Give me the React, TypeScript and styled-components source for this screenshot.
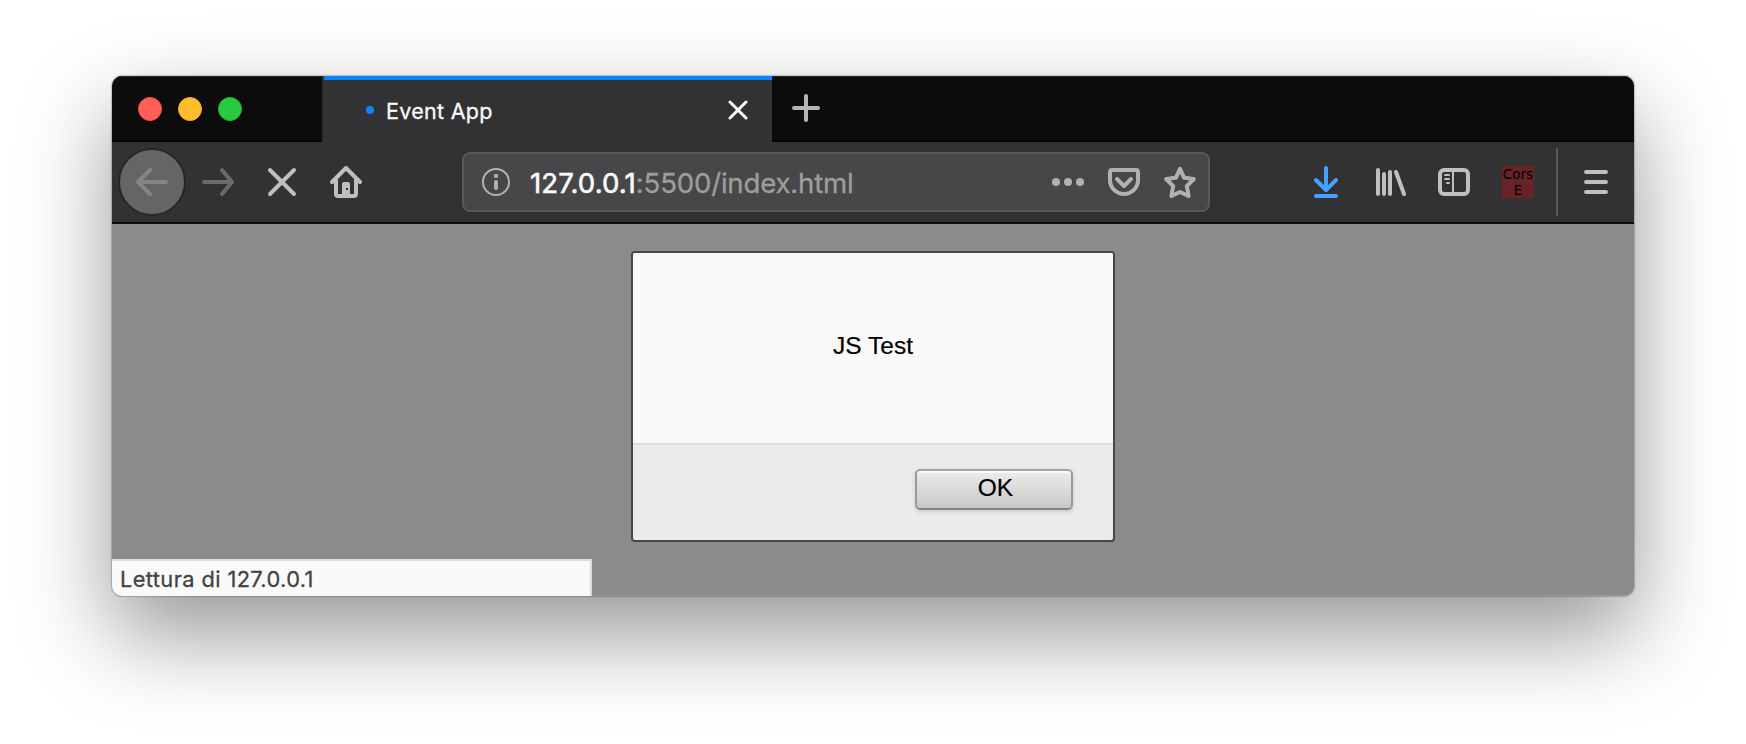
import React from 'react';
import styled, { createGlobalStyle } from 'styled-components';

const GlobalStyle = createGlobalStyle`
  *, *::before, *::after { box-sizing: border-box; }
  body { margin: 0; background: #fff; font-family: Inter, "Liberation Sans", sans-serif; }
  button { font: inherit; border: 0; padding: 0; background: none; }
`;

const Desktop = styled.main`
  height: 744px;
  padding: 76px 112px 0;
  overflow: hidden;
`;

const Window = styled.section`
  height: 520px;
  display: flex;
  flex-direction: column;
  border-radius: 10px;
  overflow: hidden;
  background: #8b8b8b;
  box-shadow: 0 0 1px 1px rgba(0, 0, 0, 0.2), 0 38px 90px rgba(0, 0, 0, 0.42);
`;

const TitleBar = styled.header`
  height: 66px;
  display: flex;
  background: #0c0c0d;
  box-shadow: inset 0 -2px #030303, inset 0 1px #2b2b2b;
`;

const TrafficLights = styled.div`
  width: 212px;
  display: flex;
  gap: 16px;
  padding: 21px 0 0 26px;
  border-right: 2px solid #2f2f30;
`;

const Light = styled.i<{ $color: string; $rim: string }>`
  width: 24px;
  height: 24px;
  border-radius: 50%;
  background: ${(p) => p.$color};
  border: 1px solid ${(p) => p.$rim};
`;

const Tab = styled.div`
  width: 448px;
  display: flex;
  align-items: center;
  padding: 2px 24px 0 42px;
  border-top: 4px solid #0a84ff;
  background: #323234;
  color: #f9f9fa;
  font-size: 21.5px;
  line-height: 28px;
`;

const LoadingDot = styled.i`
  width: 8px;
  height: 8px;
  margin-top: -4px;
  border-radius: 50%;
  background: #0a84ff;
`;

const TabTitle = styled.span`
  flex: 1;
  margin: -2px 0 0 12px;
  letter-spacing: 0.3px;
  -webkit-text-stroke: 0.3px;
`;

const CloseTab = styled.button`
  display: flex;
  margin-top: -4px;
  color: #f9f9fa;
`;

const NewTab = styled.button`
  display: flex;
  align-self: flex-start;
  margin: 16px 0 0 18px;
  color: #b5b5b6;
`;

const Toolbar = styled.nav`
  height: 82px;
  display: flex;
  align-items: center;
  padding: 0 22px 0 6px;
  background: #323234;
  border-bottom: 2px solid #0c0c0d;
`;

const BackButton = styled.button`
  width: 68px;
  height: 68px;
  flex: none;
  display: flex;
  align-items: center;
  justify-content: center;
  border-radius: 50%;
  border: 2px solid #272728;
  background: #656565;
  color: #848484;
`;

const ToolButton = styled.button<{ $gap?: number; $color?: string }>`
  display: flex;
  flex: none;
  margin-left: ${(p) => p.$gap ?? 32}px;
  color: ${(p) => p.$color ?? '#bfbfc0'};
`;

const UrlBar = styled.div`
  width: 748px;
  height: 60px;
  flex: none;
  display: flex;
  align-items: center;
  margin-left: 100px;
  padding: 0 12px 0 16px;
  border: 2px solid #58585a;
  border-radius: 8px;
  background: #474749;
  color: #b1b1b3;
  box-shadow: 0 2px 8px rgba(0, 0, 0, 0.06);
`;

const Address = styled.span`
  flex: 1;
  margin: 1px 0 0 18px;
  font-size: 27.6px;
  line-height: 36px;
  letter-spacing: -0.2px;
  color: #9d9d9e;
  -webkit-text-stroke: 0.3px;
`;

const Host = styled.span`
  color: #f9f9fa;
  letter-spacing: 0.1px;
  -webkit-text-stroke: 0.6px;
`;

const CorsBadge = styled.div`
  width: 32px;
  height: 32px;
  flex: none;
  margin-left: 32px;
  background: #672427;
  color: #000;
  font: 13.5px/16px "DejaVu Sans", sans-serif;
  text-align: center;
`;

const Divider = styled.i`
  width: 2px;
  height: 68px;
  flex: none;
  margin-left: 22px;
  background: #5b5b5d;
`;

const Page = styled.div`
  flex: 1;
  position: relative;
  display: flex;
  justify-content: center;
  align-items: flex-start;
  padding-top: 27px;
  box-shadow: inset 0 -1px #9a9a9a;
`;

const Dialog = styled.div`
  width: 484px;
  height: 291px;
  display: flex;
  flex-direction: column;
  border: 2px solid #464646;
  border-radius: 4px;
  overflow: hidden;
  background: #ebebeb;
  color: #000;
  font-family: "Liberation Sans", Arial, sans-serif;
  font-size: 24.5px;
  -webkit-text-stroke: 0.2px;
`;

const Message = styled.p`
  height: 192px;
  margin: 0;
  padding-top: 79px;
  line-height: 28px;
  text-align: center;
  background: #f9f9f9;
  border-bottom: 2px solid #dfdfdf;
`;

const Actions = styled.div`
  display: flex;
  justify-content: flex-end;
  padding: 24px 40px 0 0;
`;

const OkButton = styled.button`
  width: 158px;
  height: 41px;
  padding: 0 0 4px 3px;
  color: #000;
  line-height: 33px;
  border: 2px solid #999;
  border-top-color: #a5a5a5;
  border-bottom-color: #858585;
  border-radius: 5px;
  background: linear-gradient(#ececec, #c8c8c8);
  box-shadow: inset 0 2px #fafafa, 0 2px 4px rgba(0, 0, 0, 0.13);
`;

const StatusBar = styled.div`
  position: absolute;
  left: 0;
  bottom: 0;
  width: 480px;
  height: 37px;
  padding-left: 8px;
  border: solid #dcdcdc;
  border-width: 2px 2px 0 0;
  background: #f9f9fa;
  color: #424243;
  font-size: 21.8px;
  line-height: 36px;
  letter-spacing: 0.4px;
  -webkit-text-stroke: 0.3px;
`;

type IconProps = { size?: number; width?: number; children: React.ReactNode };

const Icon = ({ size = 32, width = 4, children }: IconProps) => (
  <svg
    width={size}
    height={size}
    viewBox={`0 0 ${size} ${size}`}
    fill="none"
    stroke="currentColor"
    strokeWidth={width}
    strokeLinecap="round"
    strokeLinejoin="round"
  >
    {children}
  </svg>
);

export default function App() {
  return (
    <Desktop>
      <GlobalStyle />
      <Window>
        <TitleBar>
          <TrafficLights>
            <Light $color="#ff5f57" $rim="#f2524a" />
            <Light $color="#ffbd2e" $rim="#f0ae24" />
            <Light $color="#28ca42" $rim="#1fba36" />
          </TrafficLights>
          <Tab>
            <LoadingDot />
            <TabTitle>Event App</TabTitle>
            <CloseTab aria-label="Close tab">
              <Icon size={20} width={3}>
                <path d="M2 2L18 18M18 2L2 18" />
              </Icon>
            </CloseTab>
          </Tab>
          <NewTab aria-label="New tab">
            <Icon>
              <path d="M16 4V28M4 16H28" />
            </Icon>
          </NewTab>
        </TitleBar>

        <Toolbar>
          <BackButton aria-label="Back">
            <Icon>
              <path d="M30 16H2M14 4L2 16L14 28" />
            </Icon>
          </BackButton>
          <ToolButton $gap={16} $color="#6b6b6c" aria-label="Forward">
            <Icon>
              <path d="M2 16H30M20 4L30 16L20 28" />
            </Icon>
          </ToolButton>
          <ToolButton aria-label="Stop">
            <Icon>
              <path d="M4 4L28 28M28 4L4 28" />
            </Icon>
          </ToolButton>
          <ToolButton aria-label="Home">
            <Icon>
              <path d="M2 16L16 2L30 16M6 14V28Q6 30 8 30H24Q26 30 26 28V14" />
              <path
                d="M12 29V18Q12 16 14 16H18Q20 16 20 18V29ZM16 22V24H18V22Z"
                fill="currentColor"
                fillRule="evenodd"
                stroke="none"
              />
            </Icon>
          </ToolButton>

          <UrlBar>
            <Icon width={2}>
              <circle cx="16" cy="16" r="13" />
              <path d="M16 16V22" strokeWidth={4} />
              <circle cx="16" cy="10" r="2.2" fill="currentColor" stroke="none" />
            </Icon>
            <Address>
              <Host>127.0.0.1</Host>:5500/index.html
            </Address>
            <ToolButton $color="#b1b1b3" aria-label="Page actions">
              <Icon>
                <g fill="currentColor" stroke="none">
                  <circle cx="4" cy="16" r="4" />
                  <circle cx="16" cy="16" r="4" />
                  <circle cx="28" cy="16" r="4" />
                </g>
              </Icon>
            </ToolButton>
            <ToolButton $gap={24} $color="#b1b1b3" aria-label="Save to Pocket">
              <Icon>
                <path d="M4 4H28Q30 4 30 6V14A14 14 0 0 1 2 14V6Q2 4 4 4Z" />
                <path d="M9 13L16 20L23 13" />
              </Icon>
            </ToolButton>
            <ToolButton $gap={24} $color="#b1b1b3" aria-label="Bookmark">
              <Icon>
                <path d="M16 2.8L20.2 11.8L29.8 13L22.8 20.2L24.6 30L16 26L7.4 30L9.2 20.2L2.2 13L11.8 11.8Z" />
              </Icon>
            </ToolButton>
          </UrlBar>

          <ToolButton $gap={100} $color="#45a1ff" aria-label="Downloads">
            <Icon>
              <path d="M16 2V24M6 14L16 24L26 14M6 30H26" />
            </Icon>
          </ToolButton>
          <ToolButton aria-label="Library">
            <Icon>
              <path d="M4 4V28M10 8V28M16 6V28M22 6L30 28" />
            </Icon>
          </ToolButton>
          <ToolButton aria-label="Sidebars">
            <Icon>
              <rect x="2" y="4" width="28" height="24" rx="4" />
              <path d="M15 5V27M7 9H11M7 13H11M9 17H11" strokeWidth={2} />
            </Icon>
          </ToolButton>
          <CorsBadge>
            Cors
            <br />E
          </CorsBadge>
          <Divider />
          <ToolButton $gap={22} aria-label="Menu">
            <Icon>
              <path d="M6 6H26M6 16H26M6 26H26" />
            </Icon>
          </ToolButton>
        </Toolbar>

        <Page>
          <Dialog role="dialog">
            <Message>JS Test</Message>
            <Actions>
              <OkButton>OK</OkButton>
            </Actions>
          </Dialog>
          <StatusBar>Lettura di 127.0.0.1</StatusBar>
        </Page>
      </Window>
    </Desktop>
  );
}
